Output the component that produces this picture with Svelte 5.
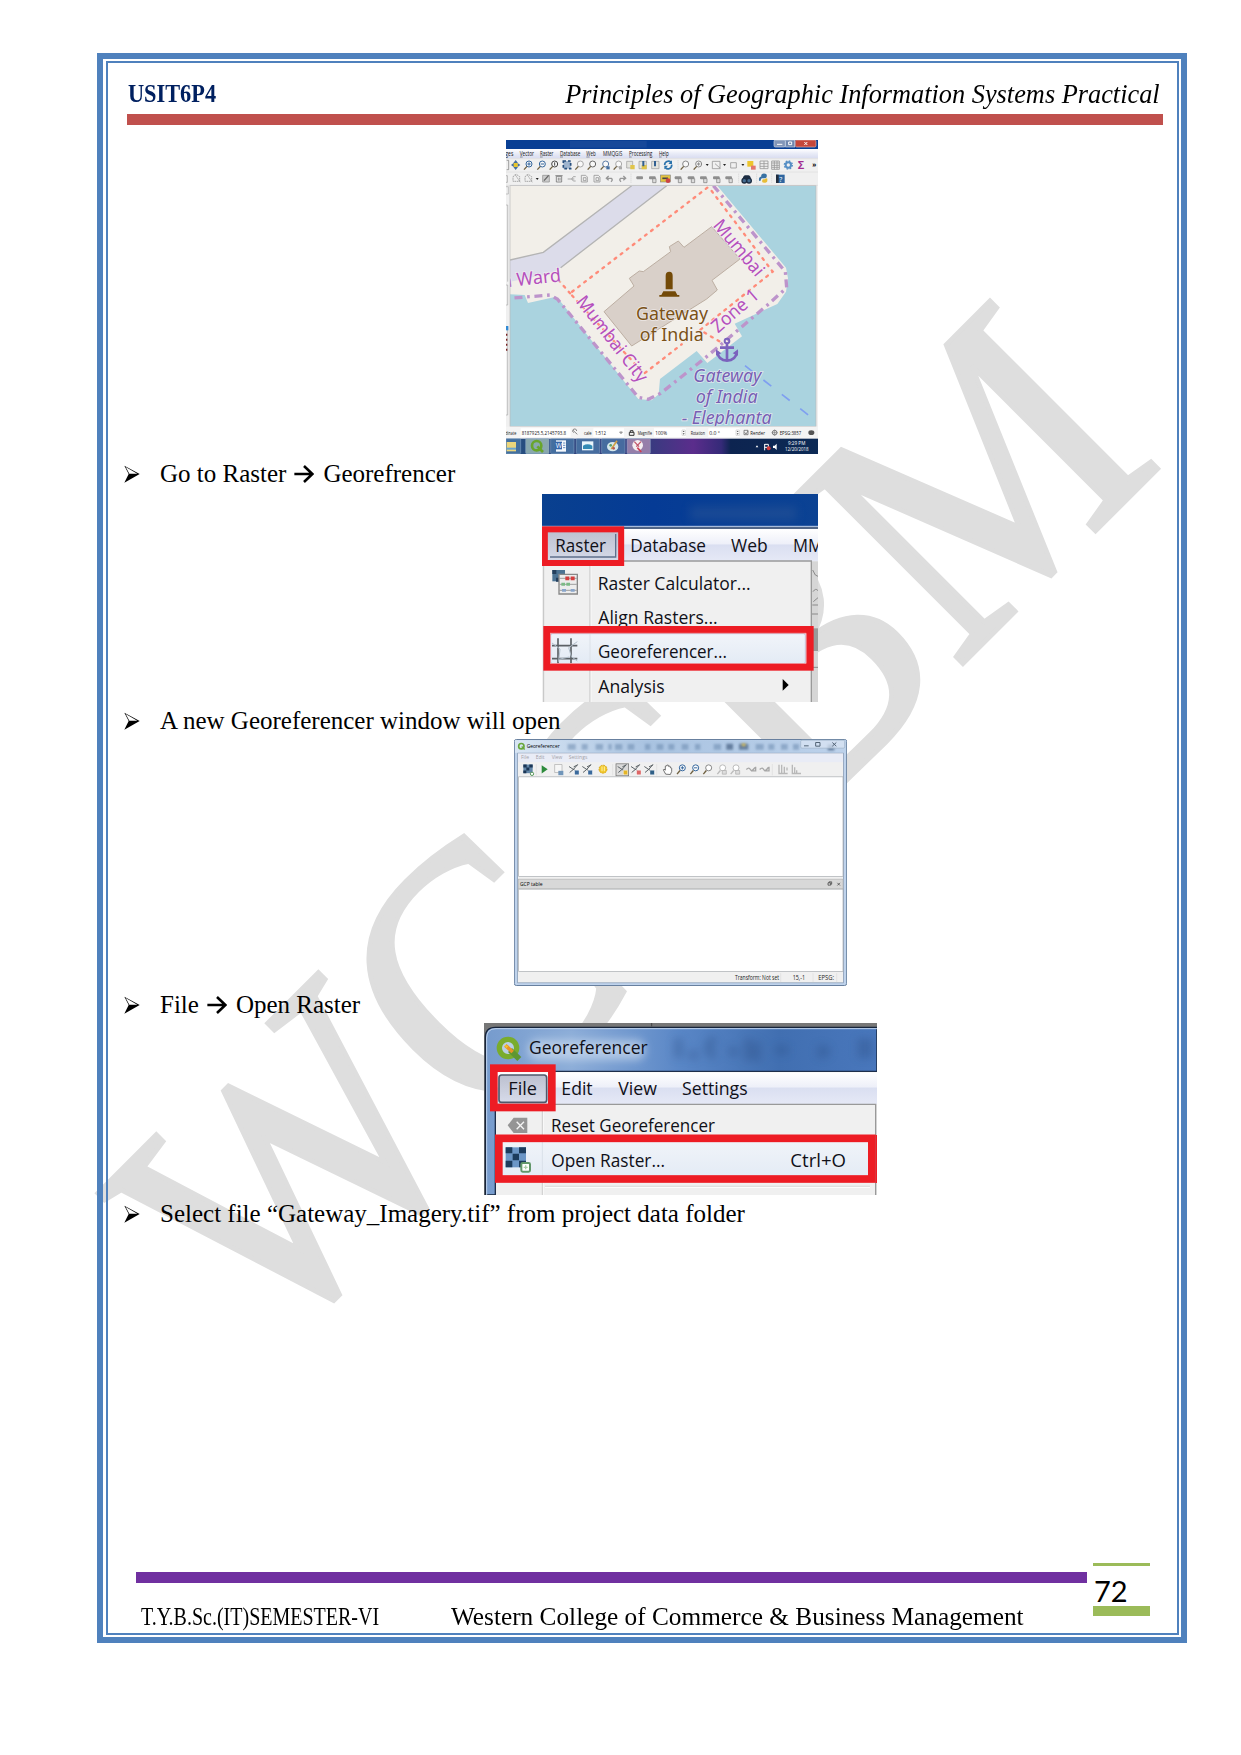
<script>
  const magnifiers = [
    { x: 85, y: 87, c: '#33659c', s: '+' },
    { x: 125, y: 87, c: '#33659c', s: '-' },
    { x: 162, y: 87, c: '#444', s: '1' },
    { x: 239, y: 87, c: '#aaa', s: '' },
    { x: 276, y: 87, c: '#666', s: '' },
    { x: 315, y: 87, c: '#5b7ba5', s: '' },
    { x: 354, y: 87, c: '#aaa', s: '' },
    { x: 555, y: 87, c: '#888', s: '' },
    { x: 594, y: 87, c: '#888', s: '+' }
  ];
  const editTools = [420, 458, 535, 574, 611, 650, 687];
  const greyTools = [
    { x: 49, k: 'node' }, { x: 85, k: 'node' }, { x: 138, k: 'pen' }, { x: 177, k: 'bin' },
    { x: 215, k: 'cut' }, { x: 253, k: 'page' }, { x: 291, k: 'page' }, { x: 329, k: 'undo' }, { x: 367, k: 'redo' }
  ];
  const taskbar = [
    { x: 18, w: 44 }, { x: 77, w: 70 }, { x: 152, w: 70 }, { x: 229, w: 70 }, { x: 305, w: 70 }, { x: 381, w: 70 }
  ];
  const points = [
    { x: 206, c: '#3b6a9c' }, { x: 246, c: '#3b6a9c' }, { x: 352, c: '#e4b526', on: true },
    { x: 392, c: '#d66' }, { x: 432, c: '#2f5f86' }
  ];
  const geoMags = [
    { x: 529, c: '#33659c', s: '+' }, { x: 569, c: '#33659c', s: '-' }, { x: 608, c: '#888', s: '' },
    { x: 650, c: '#bbb', s: '' }, { x: 690, c: '#bbb', s: '' }
  ];
</script>

{#snippet bullet()}
  <svg class="bullet" viewBox="0 0 48 54" aria-hidden="true">
    <path d="M1 2 L47 27 L1 53 L14 27 Z" fill="#000" />
    <path d="M5 6 L40 26 L16 26 Z" fill="#fff" />
  </svg>
{/snippet}

{#snippet arrow()}
  <svg class="arrow" viewBox="0 0 62 56" aria-hidden="true">
    <path d="M1 28 H56 M31 3 L57 28 L31 53" fill="none" stroke="#000" stroke-width="8" />
  </svg>
{/snippet}

<div class="page">
  <svg class="watermark" viewBox="0 0 1241 1755" aria-hidden="true">
    <text transform="rotate(-45)" x="-775" y="1150" font-size="362" textLength="1272" lengthAdjust="spacingAndGlyphs">WCCBM</text>
  </svg>

  <div class="frame">
    <div class="inner">
      <header>
        <span class="code">USIT6P4</span>
        <span class="title">Principles of Geographic Information Systems Practical</span>
      </header>
      <div class="rule"></div>

      <main>
        <svg class="shot map" viewBox="18 15 936 942">
          <defs>
            <linearGradient id="menu" x2="0" y2="1">
              <stop offset="0" stop-color="#fff" /><stop offset=".5" stop-color="#e8ebf7" /><stop offset="1" stop-color="#d8dcf0" />
            </linearGradient>
            <linearGradient id="task">
              <stop offset="0" stop-color="#24507f" /><stop offset=".47" stop-color="#3a3a80" /><stop offset=".6" stop-color="#5b2d8c" />
              <stop offset=".69" stop-color="#352a78" /><stop offset=".72" stop-color="#0d2450" /><stop offset="1" stop-color="#0c2a55" />
            </linearGradient>
            <clipPath id="canvas"><path d="M30 152H948V874H30Z" /></clipPath>
          </defs>
          <rect x="18" y="15" width="936" height="942" fill="#f0f0f0" />
          <rect x="18" y="15" width="936" height="27" fill="#093f94" />
          <rect x="210" y="18" width="230" height="20" fill="#204f9c" opacity=".6" />
          <rect x="822" y="15" width="34" height="21" rx="4" fill="#8296b8" stroke="#ced8e8" stroke-width="2" />
          <rect x="857" y="15" width="27" height="21" fill="#6f87ae" stroke="#ced8e8" stroke-width="2" />
          <rect x="886" y="15" width="62" height="21" rx="4" fill="#c5473b" stroke="#e0b7b4" stroke-width="2" />
          <path d="M831 28h16M866 21h9v8h-9zM913 21l9 9m0-9l-9 9" fill="none" stroke="#fff" stroke-width="3" />
          <rect x="18" y="42" width="936" height="28" fill="url(#menu)" />
          <g font-size="19" fill="#111">
            <text x="16" y="63" textLength="24" lengthAdjust="spacingAndGlyphs">ges</text><text x="59" y="63" textLength="43" lengthAdjust="spacingAndGlyphs">Vector</text>
            <text x="120" y="63" textLength="40" lengthAdjust="spacingAndGlyphs">Raster</text><text x="180" y="63" textLength="61" lengthAdjust="spacingAndGlyphs">Database</text>
            <text x="259" y="63" textLength="28" lengthAdjust="spacingAndGlyphs">Web</text><text x="309" y="63" textLength="58" lengthAdjust="spacingAndGlyphs">MMQGIS</text>
            <text x="387" y="63" textLength="70" lengthAdjust="spacingAndGlyphs">Processing</text><text x="477" y="63" textLength="29" lengthAdjust="spacingAndGlyphs">Help</text>
          </g>
          <path d="M60 66h8M120 66h8M180 66h9M259 66h10M387 66h8M477 66h8" stroke="#333" stroke-width="1.5" />
          <path d="M18 71h936M18 111h936M18 151h936" stroke="#dcdcdc" stroke-width="2" />
          <path d="M20 76h6v28h-6" fill="none" stroke="#777" stroke-width="2" />
          <path d="M47 75l7 9h-14zM47 105l7-9h-14zM33 90l9-7v14zM61 90l-9-7v14z" fill="#456fa0" />
          <rect x="41" y="84" width="12" height="12" fill="#e6c52e" />
          {#each magnifiers as m}
            <g stroke={m.c} fill="none" stroke-width="3">
              <circle cx={m.x + 2} cy={m.y} r="9" fill="#fff" fill-opacity=".6" />
              <path d="M{m.x - 4} {m.y + 7}l-9 10" stroke="#6f6040" stroke-width="4" />
              {#if m.s === '+'}<path d="M{m.x - 3} {m.y}h10m-5-5v10" />{/if}
              {#if m.s === '-'}<path d="M{m.x - 3} {m.y}h10" />{/if}
              {#if m.s === '1'}<path d="M{m.x + 2} {m.y - 5}v10" />{/if}
            </g>
          {/each}
          <rect x="190" y="78" width="22" height="23" fill="#9eb4ce" stroke="#274f7d" stroke-width="5" stroke-dasharray="8 6" />
          <rect x="319" y="94" width="10" height="9" fill="#456fa0" /><rect x="357" y="94" width="9" height="9" fill="#aaa" />
          <g stroke="#999" stroke-width="2" fill="#e4e4de">
            <path d="M380 79h18v20h-18zM417 79h22v22h-22zM455 79h22v22h-22z" />
          </g>
          <path d="M391 90h13v13h-13zM425 90h15v13h-15z" fill="#e1c54a" /><path d="M430 78v16M465 78v16" stroke="#315f91" stroke-width="6" />
          <path d="M494 90a11 11 0 0 1 19-8M515 89a11 11 0 0 1-19 9" fill="none" stroke="#2b73ac" stroke-width="5" />
          <path d="M516 76v11h-11zM493 103V92h11z" fill="#2b73ac" />
          <g fill="none" stroke="#999" stroke-width="2.5">
            <path d="M637 79h23v22h-23zM645 86l16 14M692 83h17v16h-17z" />
            <path d="M780 78h24v23h-24zM780 86h24M780 94h24M792 78v23M815 78h23v25h-23zM815 84h23M815 91h23M815 97h23M823 78v25M831 78v25" />
          </g>
          <path d="M617 87h9l-4 6zM669 87h9l-4 6zM724 87h9l-4 6z" fill="#222" />
          <rect x="742" y="78" width="18" height="17" fill="#edc52e" /><rect x="753" y="92" width="14" height="12" fill="#e37770" />
          <circle cx="865" cy="90" r="8" fill="none" stroke="#568fc5" stroke-width="6" /><circle cx="865" cy="90" r="12" fill="none" stroke="#568fc5" stroke-width="4" stroke-dasharray="5 4.4" />
          <text x="893" y="102" font-size="33" font-weight="700" fill="#a32d91">Σ</text>
          <text x="937" y="96" font-size="20" font-weight="700">»</text>

          {#each greyTools as t}
            <g fill="none" stroke="#979797" stroke-width="2.5">
              {#if t.k === 'node'}<path d="M{t.x - 10} 125l10-7 10 7v14h-20zM{t.x - 4} 118l16 24" stroke-dasharray="5 2" />{/if}
              {#if t.k === 'pen'}<path d="M{t.x - 10} 121h20v20h-20z" fill="#ccc" /><path d="M{t.x - 6} 137l14-16" stroke="#666" stroke-width="4" />{/if}
              {#if t.k === 'bin'}<path d="M{t.x - 8} 124h16v17h-16zM{t.x - 11} 122h22M{t.x - 2} 128v9m5-9v9" stroke="#777" />{/if}
              {#if t.k === 'cut'}<path d="M{t.x - 12} 132h20M{t.x + 12} 125h-7l-5 7 5 6h7" />{/if}
              {#if t.k === 'page'}<path d="M{t.x - 9} 121h13l5 5v15h-18zM{t.x - 3} 128h8v9h-8z" />{/if}
              {#if t.k === 'undo'}<path d="M{t.x - 9} 130h14q6 4-1 10M{t.x - 3} 123l-7 7 7 6" stroke-width="4" />{/if}
              {#if t.k === 'redo'}<path d="M{t.x + 9} 130h-14q-6 4 1 10M{t.x + 3} 123l7 7-7 6" stroke-width="4" />{/if}
            </g>
          {/each}
          <path d="M107 129h9l-4 6z" fill="#222" /><path d="M18 122h4v20h-4" stroke="#999" fill="none" stroke-width="2" />
          {#each editTools as x}
            <g>
              <rect x={x - 11} y="124" width="20" height="9" rx="3" fill="#8e8e8e" />
              {#if x > 430}<path d="M{x} 131h10v12h-10z" fill="#ddd" stroke="#777" stroke-width="2" />{/if}
            </g>
          {/each}
          <rect x="481" y="120" width="30" height="21" fill="#e4c33d" stroke="#888" stroke-width="2" /><path d="M487 130h17" stroke="#444" stroke-width="5" /><circle cx="504" cy="137" r="7" fill="#c44" />
          <circle cx="733" cy="137" r="7" fill="#456d93" stroke="#1c2c42" stroke-width="4" /><circle cx="747" cy="137" r="7" fill="#456d93" stroke="#1c2c42" stroke-width="4" /><path d="M728 132q2-13 10-11h6q7-1 9 11z" fill="#1c2c42" />
          <path d="M792 118q-6 0-6 6v3h7M780 137q-3-10 6-10h7q5 0 5-5 0-4-6-4" fill="#3871a3" stroke="#3871a3" stroke-width="5" /><path d="M792 143q10 0 10-6v-6q-4-4-8 2h-5q-4 3-2 9z" fill="#e7bd37" />
          <rect x="828" y="119" width="26" height="25" fill="#2f66a0" /><rect x="828" y="119" width="8" height="25" fill="#222d3d" />
          <text x="838" y="140" font-size="21" fill="#fff">?</text>
          <path d="M393 116v30M716 116v30M770 116v30M815 116v30M534 76v30" stroke="#c6c6c6" stroke-width="2" stroke-dasharray="3 3" />

          <path d="M18 155h7v22h-7M18 210h5v230M18 450h5v60h-5M23 575v265h-5" fill="none" stroke="#a9a9a9" stroke-width="2" />
          <rect x="18" y="573" width="7" height="13" fill="#328ad4" /><path d="M20 596v56" stroke="#722" stroke-width="4" stroke-dasharray="6 9" />

          <g clip-path="url(#canvas)">
            <rect x="30" y="152" width="918" height="722" fill="#aad3df" />
            <path d="M30 152H652L858 398L864 430L858 470L832 507L704 566L726 604L622 684L590 648L480 732L476 778L455 796L415 792L182 500L168 485L84 504L74 480L30 478Z" fill="#f2efe9" />
            <path d="M30 375L130 352L395 152H500L182 398Q160 415 130 420L30 440Z" fill="#dcdcea" />
            <path d="M30 375L130 352L395 152M500 152L182 398" fill="none" stroke="#b4b4b4" stroke-width="4" />
            <path d="M535 318L552 337L635 275L720 372L636 436L652 465L620 492L395 633L312 530L402 453L388 430L418 408L430 410L512 350L508 335Z" fill="#d9d0c9" stroke="#bcaea2" stroke-width="3" />
            <path d="M622 158L210 475L432 716L545 628M635 168L818 410L600 585L660 620M210 475L180 440" fill="none" stroke="#ff8b79" stroke-width="7" stroke-dasharray="6 17" stroke-linecap="round" />
            <path d="M640 152L856 410L860 458L800 512L620 665L482 775L445 793L415 787L172 492L150 480L30 490" fill="none" stroke="#bd94cb" stroke-width="10" stroke-dasharray="24 14 8 14" />
            <path d="M735 692L948 858" fill="none" stroke="#7f9ff0" stroke-width="5" stroke-dasharray="30 40" />
            <path d="M497 463V422Q497 410 508 410Q518 410 518 422V463ZM490 469H526L532 480H538V485H478V480H484Z" fill="#734a08" />
            <g class="maplabel" fill="#b550bd" font-size="55">
              <text transform="translate(5 458) rotate(-6)" textLength="180" lengthAdjust="spacingAndGlyphs">n Ward</text>
              <text transform="translate(637 272) rotate(50)" textLength="204" lengthAdjust="spacingAndGlyphs">Mumbai</text>
              <text transform="translate(226 500) rotate(52)" textLength="312" lengthAdjust="spacingAndGlyphs">Mumbai City</text>
              <text transform="translate(654 596) rotate(-41)" textLength="168" lengthAdjust="spacingAndGlyphs">Zone 1</text>
            </g>
            <g class="maplabel" fill="#7a5217" font-size="55">
              <text x="408" y="555" textLength="216" lengthAdjust="spacingAndGlyphs">Gateway</text><text x="419" y="617" textLength="192" lengthAdjust="spacingAndGlyphs">of India</text>
            </g>
            <g class="maplabel ferry" fill="#775fb4" font-size="53">
              <text x="580" y="741" textLength="204" lengthAdjust="spacingAndGlyphs">Gateway</text><text x="587" y="804" textLength="186" lengthAdjust="spacingAndGlyphs">of India</text><text x="545" y="868" textLength="270" lengthAdjust="spacingAndGlyphs">- Elephanta</text>
            </g>
            <g fill="none" stroke="#7b62bd" stroke-width="8">
              <circle cx="681" cy="618" r="7" stroke-width="6" /><path d="M681 626V676M660 638H702M652 650Q655 677 681 677Q707 677 711 650" />
              <path d="M648 662V643L664 655ZM714 662V643L698 655Z" fill="#7b62bd" stroke="none" />
            </g>
          </g>
          <rect x="30" y="152" width="918" height="722" fill="none" stroke="#bbb" stroke-width="2" />

          <rect x="18" y="875" width="936" height="37" fill="#f4f4f4" />
          <path d="M62 880h150v26h-150zM280 880h92v26h-92zM462 880h96v26h-96zM625 880h94v26h-94z" fill="#fff" />
          <g font-size="18" fill="#111">
            <text x="16" y="900" textLength="33" lengthAdjust="spacingAndGlyphs">dinate</text><text x="65" y="900" textLength="133" lengthAdjust="spacingAndGlyphs">8187925.5,2145793.8</text>
            <text x="252" y="900" textLength="23" lengthAdjust="spacingAndGlyphs">cale</text><text x="285" y="900" textLength="33" lengthAdjust="spacingAndGlyphs">1:512</text>
            <text x="413" y="900" textLength="43" lengthAdjust="spacingAndGlyphs">Magnifie</text><text x="466" y="900" textLength="35" lengthAdjust="spacingAndGlyphs">100%</text>
            <text x="572" y="900" textLength="43" lengthAdjust="spacingAndGlyphs">Rotation</text><text x="628" y="900" textLength="32" lengthAdjust="spacingAndGlyphs">0.0 °</text>
            <text x="751" y="900" textLength="44" lengthAdjust="spacingAndGlyphs">Render</text><text x="839" y="900" textLength="65" lengthAdjust="spacingAndGlyphs">EPSG:3857</text>
          </g>
          <path d="M219 886l13 12M221 893a6 6 0 1 1 9-5M359 891h8l-4 5zM732 886h12v13h-12zM734 892l4 5 6-9" fill="none" stroke="#555" stroke-width="2" />
          <path d="M546 885h10v16h-10zM708 885h10v16h-10z" fill="none" stroke="#ccc" stroke-width="2" /><path d="M548 891l3-4 3 4zM548 895l3 4 3-4zM710 891l3-4 3 4zM710 895l3 4 3-4z" fill="#555" />
          <path d="M388 892h14v9h-14zM391 892v-5h8v5" fill="none" stroke="#333" stroke-width="3" />
          <circle cx="824" cy="893" r="7" fill="none" stroke="#777" stroke-width="3" /><path d="M815 893h18M824 884v18" stroke="#777" stroke-width="2" /><ellipse cx="934" cy="893" rx="9" ry="7" fill="#555" />
          <rect x="18" y="911" width="936" height="46" fill="url(#task)" />
          {#each taskbar as t, i}
            <rect x={t.x} y="911" width={t.w} height="45" rx="3" fill={i === 1 ? '#a9c7be' : i === 5 ? '#b596b8' : '#4e7ba9'} fill-opacity=".75" stroke="#8eaac8" stroke-width="1.5" />
          {/each}
          <path d="M20 921h28v28H20z" fill="#ecd67b" /><path d="M20 938h28v6H20z" fill="#6aa5d0" />
          <circle cx="110" cy="932" r="14" fill="none" stroke="#68a52b" stroke-width="8" /><path d="M112 934l17 17" stroke="#68a52b" stroke-width="8" />
          <path d="M168 916h30v34h-30z" fill="#f4f8fc" /><path d="M189 924h7M189 931h7M189 938h7" stroke="#6a8fbf" stroke-width="3" /><path d="M166 920h20v23h-20z" fill="#3567ad" /><text x="167" y="939" font-size="20" fill="#fff">W</text>
          <path d="M246 919h34v27h-34z" fill="#e9f5fb" /><path d="M249 932q14-8 28 0v10h-28z" fill="#348bb5" />
          <ellipse cx="338" cy="935" rx="17" ry="14" fill="#d6e8ec" /><path d="M334 942l17-25" stroke="#d0a044" stroke-width="5" /><circle cx="332" cy="931" r="4" fill="#58a06b" /><circle cx="341" cy="940" r="4" fill="#b65a53" />
          <circle cx="413" cy="931" r="16" fill="#f4eef1" /><path d="M403 920l14 15M423 920l-14 15" stroke="#c0566c" stroke-width="4" /><path d="M412 938l12 13" stroke="#ce3f54" stroke-width="5" />
          <path d="M767 937l4-6 4 6zM819 932h5l6-6v19l-6-6h-5z" fill="#fff" /><path d="M794 927v19M794 928h11v9h-11" stroke="#fff" stroke-width="3" fill="none" /><circle cx="806" cy="940" r="6" fill="#d43b3b" />
          <g font-size="17" fill="#fff"><text x="864" y="930" textLength="52" lengthAdjust="spacingAndGlyphs">9:29 PM</text><text x="855" y="949" textLength="71" lengthAdjust="spacingAndGlyphs">12/20/2018</text></g>
        </svg>

        <p>{@render bullet()}<span>Go to Raster</span>{@render arrow()}<span>Georefrencer</span></p>

        <svg class="shot menu" viewBox="36 27 828 624">
          <defs>
            <linearGradient id="bar" x2="0" y2="1"><stop offset="0" stop-color="#fff" /><stop offset=".45" stop-color="#eef0f9" /><stop offset=".5" stop-color="#dadff1" /><stop offset="1" stop-color="#e6e9f6" /></linearGradient>
            <linearGradient id="titleblue"><stop offset="0" stop-color="#09408f" /><stop offset=".4" stop-color="#053b95" /><stop offset="1" stop-color="#0b4293" /></linearGradient>
            <linearGradient id="pressed" x2="0" y2="1"><stop offset="0" stop-color="#bcc0cf" /><stop offset="1" stop-color="#d7dbea" /></linearGradient>
            <linearGradient id="hover" x2="0" y2="1"><stop offset="0" stop-color="#f1f4f9" /><stop offset="1" stop-color="#e3ebf5" /></linearGradient>
            <filter id="soft" x="-20%" y="-60%" width="140%" height="220%"><feGaussianBlur stdDeviation="14" /></filter>
          </defs>
          <rect x="36" y="27" width="828" height="624" fill="#f0f0f0" />
          <rect x="36" y="27" width="828" height="99" fill="url(#titleblue)" />
          <rect x="480" y="65" width="320" height="40" fill="#3d6097" opacity=".35" filter="url(#soft)" />
          <path d="M36 124H864" stroke="#c8d5ea" stroke-width="3" /><path d="M36 129H864" stroke="#1b3765" stroke-width="5" />
          <rect x="36" y="132" width="828" height="97" fill="url(#bar)" />
          <rect x="843" y="229" width="21" height="422" fill="#d6d6d6" />
          <path d="M848 255l8 15 8 4M849 320q8-12 15-3M850 350l14-12M845 387h19M845 547h19M847 360h17" stroke="#8a8a8a" stroke-width="3" fill="none" />
          <rect x="849" y="430" width="15" height="68" fill="#999" />
          <path d="M41 228H844V651" fill="none" stroke="#9a9a9a" stroke-width="4" /><path d="M41 228V651M180 232V651" stroke="#c2c2c2" stroke-width="3" /><path d="M183 232V651" stroke="#fff" stroke-width="2" />
          <rect x="44" y="133" width="230" height="101" fill="url(#pressed)" />
          <path d="M257 147V216H60" fill="none" stroke="#60708c" stroke-width="4" />
          <rect x="44.500" y="133" width="229" height="101" fill="none" stroke="#ed1c24" stroke-width="18" />
          <g class="ui">
            <text x="76" y="201" textLength="152" lengthAdjust="spacingAndGlyphs">Raster</text>
            <text x="301" y="201" textLength="227" lengthAdjust="spacingAndGlyphs">Database</text>
            <text x="603" y="201" textLength="110" lengthAdjust="spacingAndGlyphs">Web</text>
            <text x="789" y="201" textLength="90" lengthAdjust="spacingAndGlyphs">MM</text>
            <text x="203" y="315" textLength="459" lengthAdjust="spacingAndGlyphs">Raster Calculator...</text>
            <text x="205" y="417" textLength="358" lengthAdjust="spacingAndGlyphs">Align Rasters...</text>
            <text x="205" y="624" textLength="199" lengthAdjust="spacingAndGlyphs">Analysis</text>
          </g>
          <path d="M758 582L776 600L758 617Z" />
          <rect x="62" y="446" width="764" height="90" rx="6" fill="url(#hover)" stroke="#b2caea" stroke-width="3" />
          <path d="M180 446V536" stroke="#dbe1e8" stroke-width="3" />
          <text class="ui" x="204" y="520" textLength="387" lengthAdjust="spacingAndGlyphs">Georeferencer...</text>
          <path d="M84 460V536M123 460V536M66 482H142M66 521H142" stroke="#5c6166" stroke-width="5" />
          <path d="M66 474L90 492L86 530M142 470L116 488L124 515L142 528M90 522L118 516" fill="none" stroke="#b3c0cc" stroke-width="3" />
          <rect x="51" y="434" width="789" height="112" fill="none" stroke="#ed1c24" stroke-width="22" />
          <rect x="61.500" y="444.500" width="766" height="91" fill="none" stroke="#f3aaae" stroke-width="2" />
          <path d="M67 255h38v34H67z" fill="#4c7393" /><path d="M67 255h12v12H67zM92 267h13v11H92zM78 278h14v12H78z" fill="#243f5c" />
          <path d="M87 268h55v59H87z" fill="#ededed" stroke="#888" stroke-width="4" />
          <path d="M89 280h51M89 298h51M89 316h51" stroke="#777" stroke-width="2" />
          <path d="M106 280h30" stroke="#d33e3e" stroke-width="11" stroke-dasharray="12 4" /><path d="M94 298h27" stroke="#7dba86" stroke-width="9" stroke-dasharray="11 4" /><path d="M96 316h40" stroke="#8aa6cb" stroke-width="8" stroke-dasharray="12 14" />
        </svg>

        <p>{@render bullet()}<span>A new Georeferencer window will open</span></p>

        <svg class="shot window" viewBox="27 27 999 740">
          <defs>
            <linearGradient id="aero"><stop offset="0" stop-color="#d9e6f4" /><stop offset=".4" stop-color="#a9c3e1" /><stop offset="1" stop-color="#bdd2eb" /></linearGradient>
            <filter id="haze" filterUnits="userSpaceOnUse" x="27" y="27" width="999" height="45"><feGaussianBlur stdDeviation="3" /></filter>
          </defs>
          <rect x="28" y="28" width="997" height="738" rx="6" fill="#bfd3ec" stroke="#68809f" stroke-width="3" />
          <rect x="30" y="30" width="993" height="38" fill="url(#aero)" />
          <path d="M188 50h24M230 50h18M272 50h22M310 50h10M330 50h22M368 50h20M420 50h16M455 50h20M490 50h18M530 50h20M570 50h16M626 50h22M752 50h24M790 50h18M828 50h20M864 50h18" stroke="#6685aa" stroke-width="17" opacity=".5" filter="url(#haze)" />
          <path d="M664 50h20M702 50h28M968 52h20" stroke="#3c587b" stroke-width="18" opacity=".65" filter="url(#haze)" /><path d="M710 44h12" stroke="#d0b95c" stroke-width="8" filter="url(#haze)" />
          <rect x="887" y="30" width="132" height="24" rx="4" fill="#dbe6f3" fill-opacity=".7" stroke="#9db0c6" stroke-width="2" />
          <path d="M897 47h14M932 37h13v11h-13zM982 37l12 11m0-11l-12 11" fill="none" stroke="#536476" stroke-width="3" />
          <circle cx="49" cy="48" r="8" fill="none" stroke="#69a83c" stroke-width="5" /><path d="M50 49l9 9" stroke="#69a83c" stroke-width="4" />
          <text x="65" y="54" font-size="18" textLength="99" lengthAdjust="spacingAndGlyphs">Georeferencer</text>
          <rect x="38" y="69" width="977" height="689" fill="#f0f0f0" stroke="#8094ad" stroke-width="2" />
          <rect x="39" y="70" width="975" height="26" fill="#e9ecf6" />
          <g font-size="18" fill="#a1a1a8"><text x="48" y="88" textLength="24" lengthAdjust="spacingAndGlyphs">File</text><text x="92" y="88" textLength="27" lengthAdjust="spacingAndGlyphs">Edit</text><text x="140" y="88" textLength="32" lengthAdjust="spacingAndGlyphs">View</text><text x="191" y="88" textLength="56" lengthAdjust="spacingAndGlyphs">Settings</text></g>
          <path d="M55 103h28v26H55z" fill="#6286a8" /><path d="M55 103h10v9H55zM73 103h10v9H73zM64 112h9v9h-9zM55 121h9v8h-9z" fill="#1b3656" /><circle cx="81" cy="131" r="5" fill="#fff" stroke="#5b9b5d" stroke-width="3" />
          <path d="M110 105L128 117L110 130Z" fill="#2d8b3c" />
          <path d="M149 103h22v24h-22z" fill="#f6f6f6" stroke="#aaa" stroke-width="2" /><path d="M160 122h15v13h-15z" fill="#7095b9" />
          {#each points as p}
            <g>
              {#if p.on}<rect x="333" y="101" width="38" height="36" fill="#dadada" stroke="#666" stroke-width="2" />{/if}
              <path d="M{p.x - 14} 109l24 16M{p.x - 12} 127q12-8 24-24M{p.x} 110l12-6" fill="none" stroke="#5d6468" stroke-width="3" />
              <rect x={p.x + 3} y="120" width="13" height="14" fill={p.c} stroke="#fff" />
            </g>
          {/each}
          <circle cx="294" cy="117" r="12" fill="#f1c72d" stroke="#d6a41c" stroke-width="3" stroke-dasharray="5 3" /><path d="M291 109v14M298 109v14" stroke="#fff2a1" stroke-width="3" />
          <path d="M482 132l-7-13q1-5 6 1v-12q3-4 5 0v-2q3-4 5 0v3q4-3 5 1v3q4-1 4 2v9l-4 9z" fill="#fff" stroke="#333" stroke-width="2" />
          {#each geoMags as m}
            <g stroke={m.c} fill="none" stroke-width="3">
              <circle cx={m.x + 3} cy="113" r="9" fill="#fff" /><path d="M{m.x - 4} 121l-9 11" stroke={m.c === '#bbb' ? '#bbb' : '#6f6040'} stroke-width="4" />
              {#if m.s === '+'}<path d="M{m.x - 2} 113h10m-5-5v10" />{/if}
              {#if m.s === '-'}<path d="M{m.x - 2} 113h10" />{/if}
            </g>
          {/each}
          <path d="M652 121h12v11h-12zM692 121h12v11h-12z" fill="#ddd" stroke="#aaa" stroke-width="2" />
          <path d="M724 118q8-8 12 0t14-6M738 122h14v-12M764 118q8-8 12 0t14-6M778 122h14v-12" fill="none" stroke="#a6a6a6" stroke-width="4" />
          <path d="M822 104v25M830 104v25M838 110v19M820 130h28M846 112v9M862 104v25M869 111v18M875 120v9M860 130h28" stroke="#b8b8b8" stroke-width="4" />
          <path d="M94 103v32M323 103v32M455 103v32M802 103v32" stroke="#c8c8c8" stroke-width="2" stroke-dasharray="3 3" />
          <rect x="41" y="140" width="973" height="299" fill="#fff" stroke="#a5a9ae" stroke-width="2" />
          <rect x="40" y="447" width="974" height="29" fill="#d8d8d8" stroke="#b4b4b4" stroke-width="2" />
          <text x="45" y="468" font-size="18" textLength="68" lengthAdjust="spacingAndGlyphs">GCP table</text>
          <path d="M969 458h8v7h-8zM972 458v-3h8v7h-3M997 458l8 8m0-8l-8 8" fill="none" stroke="#333" stroke-width="2" />
          <rect x="41" y="477" width="973" height="247" fill="#fff" stroke="#a5a9ae" stroke-width="2" />
          <g font-size="19" fill="#222"><text x="690" y="749" textLength="132" lengthAdjust="spacingAndGlyphs">Transform: Not set</text><text x="863" y="749" textLength="37" lengthAdjust="spacingAndGlyphs">15,-1</text><text x="940" y="749" textLength="47" lengthAdjust="spacingAndGlyphs">EPSG:</text></g>
          <path d="M827 729v27M924 729v27M995 729v27" stroke="#ddd" stroke-width="2" />
        </svg>

        <p>{@render bullet()}<span>File</span>{@render arrow()}<span>Open Raster</span></p>

        <svg class="shot file" viewBox="27 24 1179 516">
          <defs>
            <linearGradient id="glass"><stop offset="0" stop-color="#769bcd" /><stop offset=".22" stop-color="#8cadd8" /><stop offset=".5" stop-color="#5986c6" /><stop offset=".75" stop-color="#416fb1" /><stop offset="1" stop-color="#4977bc" /></linearGradient>
            <filter id="glow" filterUnits="userSpaceOnUse" x="27" y="40" width="1179" height="127"><feGaussianBlur stdDeviation="13" /></filter>
          </defs>
          <rect x="27" y="24" width="1179" height="516" fill="#777" />
          <path d="M530 24V34" stroke="#444" stroke-width="3" />
          <path d="M31 540V67Q31 37 61 37H1206V540Z" fill="url(#glass)" stroke="#17243a" stroke-width="4" />
          <path d="M35 540V69Q35 41 63 41H1206" fill="none" stroke="#c0d3ed" stroke-width="3" />
          <rect x="160" y="75" width="350" height="60" rx="25" fill="#d6e3f3" opacity=".6" filter="url(#glow)" />
          <path d="M610 70v60M640 120h30M720 70q-40 30 0 55M760 110h30M820 70v50l25-20v40M900 105h40M1040 90v40M1030 110h35M1160 70v60M1180 70v60" stroke="#294e83" stroke-width="26" fill="none" opacity=".35" filter="url(#glow)" />
          <circle cx="99" cy="99" r="26" fill="#b9cfe6" stroke="#79ac2d" stroke-width="16" />
          <path d="M105 105L133 132" stroke="#5f9631" stroke-width="17" /><path d="M91 91L113 111" stroke="#e89425" stroke-width="11" /><path d="M88 89l12 4-6 7z" fill="#f4c62b" />
          <text class="ui" x="162" y="118" textLength="356" lengthAdjust="spacingAndGlyphs">Georeferencer</text>
          <rect x="61" y="169" width="1145" height="371" fill="#f0f0f0" />
          <path d="M61 540V169H1206" fill="none" stroke="#1d2e4b" stroke-width="4" />
          <rect x="64" y="172" width="1142" height="96" fill="url(#bar)" />
          <path d="M65 268H1202V540" fill="none" stroke="#999" stroke-width="4" /><path d="M202 272V540" stroke="#c7c7c7" stroke-width="3" /><path d="M205 272V540" stroke="#fff" stroke-width="2" />
          <rect x="72" y="180" width="143" height="82" rx="8" fill="url(#pressed)" stroke="#50586a" stroke-width="5" />
          <rect x="56.500" y="159.500" width="174" height="118" fill="none" stroke="#ed1c24" stroke-width="23" />
          <g class="ui">
            <text x="100" y="239" textLength="86" lengthAdjust="spacingAndGlyphs">File</text>
            <text x="259" y="239" textLength="94" lengthAdjust="spacingAndGlyphs">Edit</text>
            <text x="430" y="239" textLength="116" lengthAdjust="spacingAndGlyphs">View</text>
            <text x="621" y="239" textLength="197" lengthAdjust="spacingAndGlyphs">Settings</text>
            <text x="228" y="351" textLength="492" lengthAdjust="spacingAndGlyphs">Reset Georeferencer</text>
          </g>
          <path d="M98 331L116 308H157V354H116Z" fill="#959595" /><path d="M125 320L147 343M147 320L125 343" stroke="#f4f4f4" stroke-width="4" />
          <rect x="72" y="370" width="1119" height="122" fill="url(#hover)" />
          <path d="M202 380V482" stroke="#d9e0e9" stroke-width="3" />
          <g class="ui"><text x="229" y="456" textLength="341" lengthAdjust="spacingAndGlyphs">Open Raster...</text><text x="946" y="456" textLength="167" lengthAdjust="spacingAndGlyphs">Ctrl+O</text></g>
          <path d="M92 397h61v60H92z" fill="#6c96c6" /><path d="M92 397h20v18H92zM132 397h21v18h-21zM113 416h19v20h-19zM92 437h20v20H92zM132 437h21v20h-21z" fill="#1d3c5d" />
          <rect x="139" y="444" width="26" height="26" rx="4" fill="#fff" stroke="#62976a" stroke-width="6" /><path d="M152 451v12M146 457h12" stroke="#a9cda8" stroke-width="4" />
          <rect x="71.500" y="370" width="1119" height="122" fill="none" stroke="#ed1c24" stroke-width="23" />
          <path d="M1202 360h4v144h-4z" fill="#ed1c24" />
          <path d="M210 514H1185" stroke="#c9c9c9" stroke-width="2" /><path d="M210 517H1185" stroke="#fff" stroke-width="3" />
        </svg>

        <p>{@render bullet()}<span>Select file “Gateway_Imagery.tif” from project data folder</span></p>
      </main>

      <footer>
        <div class="left">
          <div class="purple"></div>
          <div class="names">
            <span class="sem">T.Y.B.Sc.(IT)SEMESTER-VI</span>
            <span class="college">Western College of Commerce &amp; Business Management</span>
          </div>
        </div>
        <div class="number"><span>72</span></div>
      </footer>
    </div>
  </div>
</div>

<style>
  :global(body) { background: #fff; }
  .page {
    position: relative;
    box-sizing: border-box;
    width: 1241px;
    height: 1755px;
    padding: 53px 54px 112px 97px;
    overflow: hidden;
    background: #fff;
    color: #000;
    font-family: "Liberation Serif", serif;
  }
  .watermark {
    position: absolute;
    inset: 0;
    width: 1241px;
    height: 1755px;
    fill: #dedede;
    stroke: #dedede;
    stroke-width: 5px;
    font-family: "Liberation Serif", serif;
  }
  .frame {
    position: relative;
    box-sizing: border-box;
    height: 1590px;
    padding: 2px 2px 2px 3px;
    border: 6px solid #4f81bd;
  }
  .inner {
    box-sizing: border-box;
    display: flex;
    flex-direction: column;
    height: 100%;
    border: 2px solid #4f81bd;
  }
  header {
    display: flex;
    justify-content: space-between;
    height: 51px;
    margin: 0 17px 0 20px;
    line-height: 62px;
    white-space: nowrap;
  }
  .code { font-size: 25px; font-weight: 700; color: #002060; transform: scaleX(.893); transform-origin: left; }
  .title { font-size: 27px; font-style: italic; transform: scaleX(.975); transform-origin: right; }
  .rule { flex: none; height: 11px; margin: 0 14px 0 19px; background: #c0504d; }
  main { flex: 1; padding-top: 15px; }
  .shot { display: block; font-family: "Open Sans", "Noto Sans", sans-serif; }
  .shot .ui { font-size: 54px; fill: #101018; }
  .map { width: 312px; height: 314px; margin-left: 398px; }
  .menu { width: 276px; height: 208px; margin-left: 434px; }
  .window { width: 333px; height: 247px; margin-left: 406px; }
  .file { width: 393px; height: 172px; margin-left: 376px; }
  .map .maplabel text { font-family: "Noto Sans", sans-serif; stroke: #f6f2f3; stroke-width: 5px; stroke-opacity: .7; paint-order: stroke; }
  .map .ferry text { font-style: italic; }
  p {
    display: flex;
    align-items: center;
    height: 40px;
    margin: 0;
    padding-left: 16px;
    font-size: 25px;
    line-height: 40px;
    white-space: nowrap;
  }
  .menu + p { height: 37px; }
  .window + p { height: 37px; }
  .file + p { height: 38px; }
  .bullet { width: 16px; height: 18px; margin-right: 20px; }
  .arrow { width: 20px; height: 18px; margin: 0 9px 0 8px; }
  footer { display: flex; gap: 6px; height: 70px; margin-left: 28px; }
  .left { width: 951px; padding-top: 9px; }
  .purple { height: 10.500px; background: #7030a0; }
  .names { display: flex; align-items: baseline; gap: 72px; padding: 19px 0 0 5px; white-space: nowrap; }
  .sem { width: 238px; font-size: 25px; transform: scaleX(.8); transform-origin: left; }
  .college { font-size: 26px; transform: scaleX(.973); transform-origin: left; }
  .number {
    box-sizing: border-box;
    width: 57px;
    height: 53px;
    border-top: 3px solid #9bbb59;
    border-bottom: 10px solid #9bbb59;
    font: 29px/50px Lato, sans-serif;
  }
  .number span { padding-left: 1px; }
</style>
